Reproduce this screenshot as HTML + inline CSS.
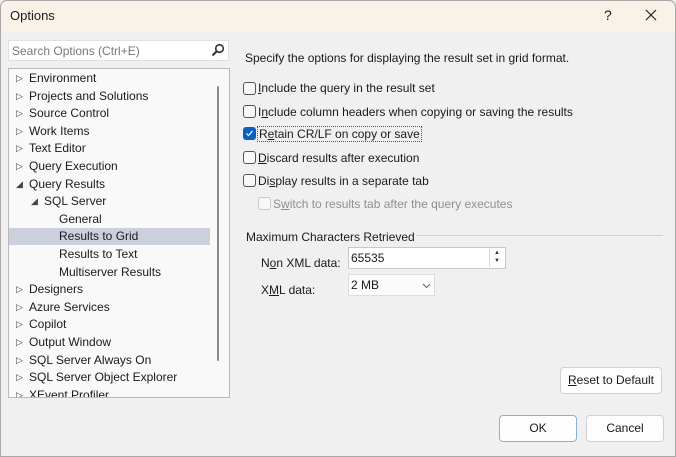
<!DOCTYPE html>
<html><head><style>
*{box-sizing:border-box}
body{margin:0;width:676px;height:457px;overflow:hidden;background:#f0f0f0;font-family:"Liberation Sans",sans-serif;font-size:12px;color:#1a1a1a;position:relative}
.a{position:absolute;white-space:nowrap}
.title{left:0;top:0;width:676px;height:31px;background:#f8f2e8;border:1px solid #c8c8c8;border-bottom:none;border-radius:7px 7px 0 0}
.win{left:0;top:0;width:676px;height:457px;border:1px solid #a8a8a8;border-radius:7px 7px 0 0}
.tree{left:8px;top:68px;width:222px;height:330px;background:#f9f9f9;border:1px solid #b9b9b9;overflow:hidden}
.row{position:absolute;left:0;height:17px;line-height:17px;width:201px}
.tri{position:absolute;font-size:9px;color:#444}
.cb{position:absolute;width:13px;height:13px;border:1px solid #555;border-radius:3px;background:#f8f8f8}
.btn{position:absolute;background:#fdfdfd;border:1px solid #d0d0d0;border-radius:4px;text-align:center}
u{text-decoration:underline}
</style></head><body>
<div class="a title"></div>
<div class="a win"></div>
<div class="a" style="left:10px;top:8px;font-size:13px">Options</div>
<div class="a" style="left:604px;top:7px;font-size:14px">?</div>
<svg class="a" style="left:645px;top:9px" width="12" height="12"><path d="M1 1L11 11M11 1L1 11" stroke="#222" stroke-width="1.2"/></svg>
<div class="a" style="left:8px;top:40px;width:221px;height:21px;background:#fff;border:1px solid #e0e0e0"></div>
<div class="a" style="left:12px;top:44px;color:#777">Search Options (Ctrl+E)</div>
<svg class="a" style="left:211px;top:43px" width="14" height="14"><circle cx="8.5" cy="5.5" r="3.8" fill="none" stroke="#333" stroke-width="1.6"/><path d="M6 8L1.5 12.5" stroke="#333" stroke-width="2"/></svg>
<div class="a tree">
<div class="row" style="top:1px"><span class="tri" style="left:7px">▷</span><span style="position:absolute;left:20px">Environment</span></div>
<div class="row" style="top:18.6px"><span class="tri" style="left:7px">▷</span><span style="position:absolute;left:20px">Projects and Solutions</span></div>
<div class="row" style="top:36.2px"><span class="tri" style="left:7px">▷</span><span style="position:absolute;left:20px">Source Control</span></div>
<div class="row" style="top:53.8px"><span class="tri" style="left:7px">▷</span><span style="position:absolute;left:20px">Work Items</span></div>
<div class="row" style="top:71.4px"><span class="tri" style="left:7px">▷</span><span style="position:absolute;left:20px">Text Editor</span></div>
<div class="row" style="top:89px"><span class="tri" style="left:7px">▷</span><span style="position:absolute;left:20px">Query Execution</span></div>
<div class="row" style="top:106.6px"><span class="tri" style="left:7px">◢</span><span style="position:absolute;left:20px">Query Results</span></div>
<div class="row" style="top:124.2px"><span class="tri" style="left:22px">◢</span><span style="position:absolute;left:35px">SQL Server</span></div>
<div class="row" style="top:141.8px"><span style="position:absolute;left:50px">General</span></div>
<div class="row" style="top:159.4px;background:#ccd0dc"><span style="position:absolute;left:50px">Results to Grid</span></div>
<div class="row" style="top:177px"><span style="position:absolute;left:50px">Results to Text</span></div>
<div class="row" style="top:194.6px"><span style="position:absolute;left:50px">Multiserver Results</span></div>
<div class="row" style="top:212.2px"><span class="tri" style="left:7px">▷</span><span style="position:absolute;left:20px">Designers</span></div>
<div class="row" style="top:229.8px"><span class="tri" style="left:7px">▷</span><span style="position:absolute;left:20px">Azure Services</span></div>
<div class="row" style="top:247.4px"><span class="tri" style="left:7px">▷</span><span style="position:absolute;left:20px">Copilot</span></div>
<div class="row" style="top:265px"><span class="tri" style="left:7px">▷</span><span style="position:absolute;left:20px">Output Window</span></div>
<div class="row" style="top:282.6px"><span class="tri" style="left:7px">▷</span><span style="position:absolute;left:20px">SQL Server Always On</span></div>
<div class="row" style="top:300.2px"><span class="tri" style="left:7px">▷</span><span style="position:absolute;left:20px">SQL Server Object Explorer</span></div>
<div class="row" style="top:317.8px"><span class="tri" style="left:7px">▷</span><span style="position:absolute;left:20px">XEvent Profiler</span></div>
<div style="position:absolute;left:208px;top:17px;width:2px;height:275px;background:#8a8a8a;border-radius:1px"></div>
</div>
<div class="a" style="left:245px;top:51px">Specify the options for displaying the result set in grid format.</div>
<div class="cb" style="left:243px;top:82px"></div><div class="a" style="left:258px;top:81px"><u>I</u>nclude the query in the result set</div>
<div class="cb" style="left:243px;top:105px"></div><div class="a" style="left:258px;top:105px">I<u>n</u>clude column headers when copying or saving the results</div>
<div class="cb" style="left:243px;top:127px;background:#0f5fc0;border-color:#0f5fc0"><svg width="11" height="11" style="position:absolute;left:0;top:0"><path d="M2.5 5.5L4.5 7.5L8.5 3" fill="none" stroke="#fff" stroke-width="1.2"/></svg></div>
<div class="a" style="left:257px;top:126px;border:1px dotted #555;padding:0 1px;line-height:14px">R<u>e</u>tain CR/LF on copy or save</div>
<div class="cb" style="left:243px;top:151px"></div><div class="a" style="left:258px;top:151px"><u>D</u>iscard results after execution</div>
<div class="cb" style="left:243px;top:174px"></div><div class="a" style="left:258px;top:174px">Di<u>s</u>play results in a separate tab</div>
<div class="cb" style="left:258px;top:197px;border-color:#c8c8c8"></div><div class="a" style="left:273px;top:197px;color:#8f8f8f">S<u>w</u>itch to results tab after the query executes</div>
<div class="a" style="left:246px;top:230px">Maximum Characters Retrieved</div>
<div class="a" style="left:416px;top:235px;width:247px;height:1px;background:#d0d0d0"></div>
<div class="a" style="left:261px;top:256px">N<u>o</u>n XML data:</div>
<div class="a" style="left:348px;top:247px;width:158px;height:22px;background:#fff;border:1px solid #c8c8c8"></div>
<div class="a" style="left:351px;top:251px">65535</div>
<div class="a" style="left:489px;top:249px;width:15px;height:18px;border-left:1px solid #ddd;font-size:6px;line-height:8px;text-align:center;color:#333">▲<br>▼</div>
<div class="a" style="left:261px;top:283px">X<u>M</u>L data:</div>
<div class="a" style="left:348px;top:274px;width:87px;height:22px;background:#fbfbfb;border:1px solid #ddd"></div>
<div class="a" style="left:351px;top:278px">2 MB</div>
<svg class="a" style="left:422px;top:283px" width="9" height="6"><path d="M1 1L4.5 4.5L8 1" fill="none" stroke="#666"/></svg>
<div class="btn" style="left:560px;top:367px;width:102px;height:27px;line-height:25px"><u>R</u>eset to Default</div>
<div class="btn" style="left:499px;top:415px;width:78px;height:27px;line-height:25px;border-color:#8ab0d8">OK</div>
<div class="btn" style="left:586px;top:415px;width:78px;height:27px;line-height:25px">Cancel</div>
</body></html>
